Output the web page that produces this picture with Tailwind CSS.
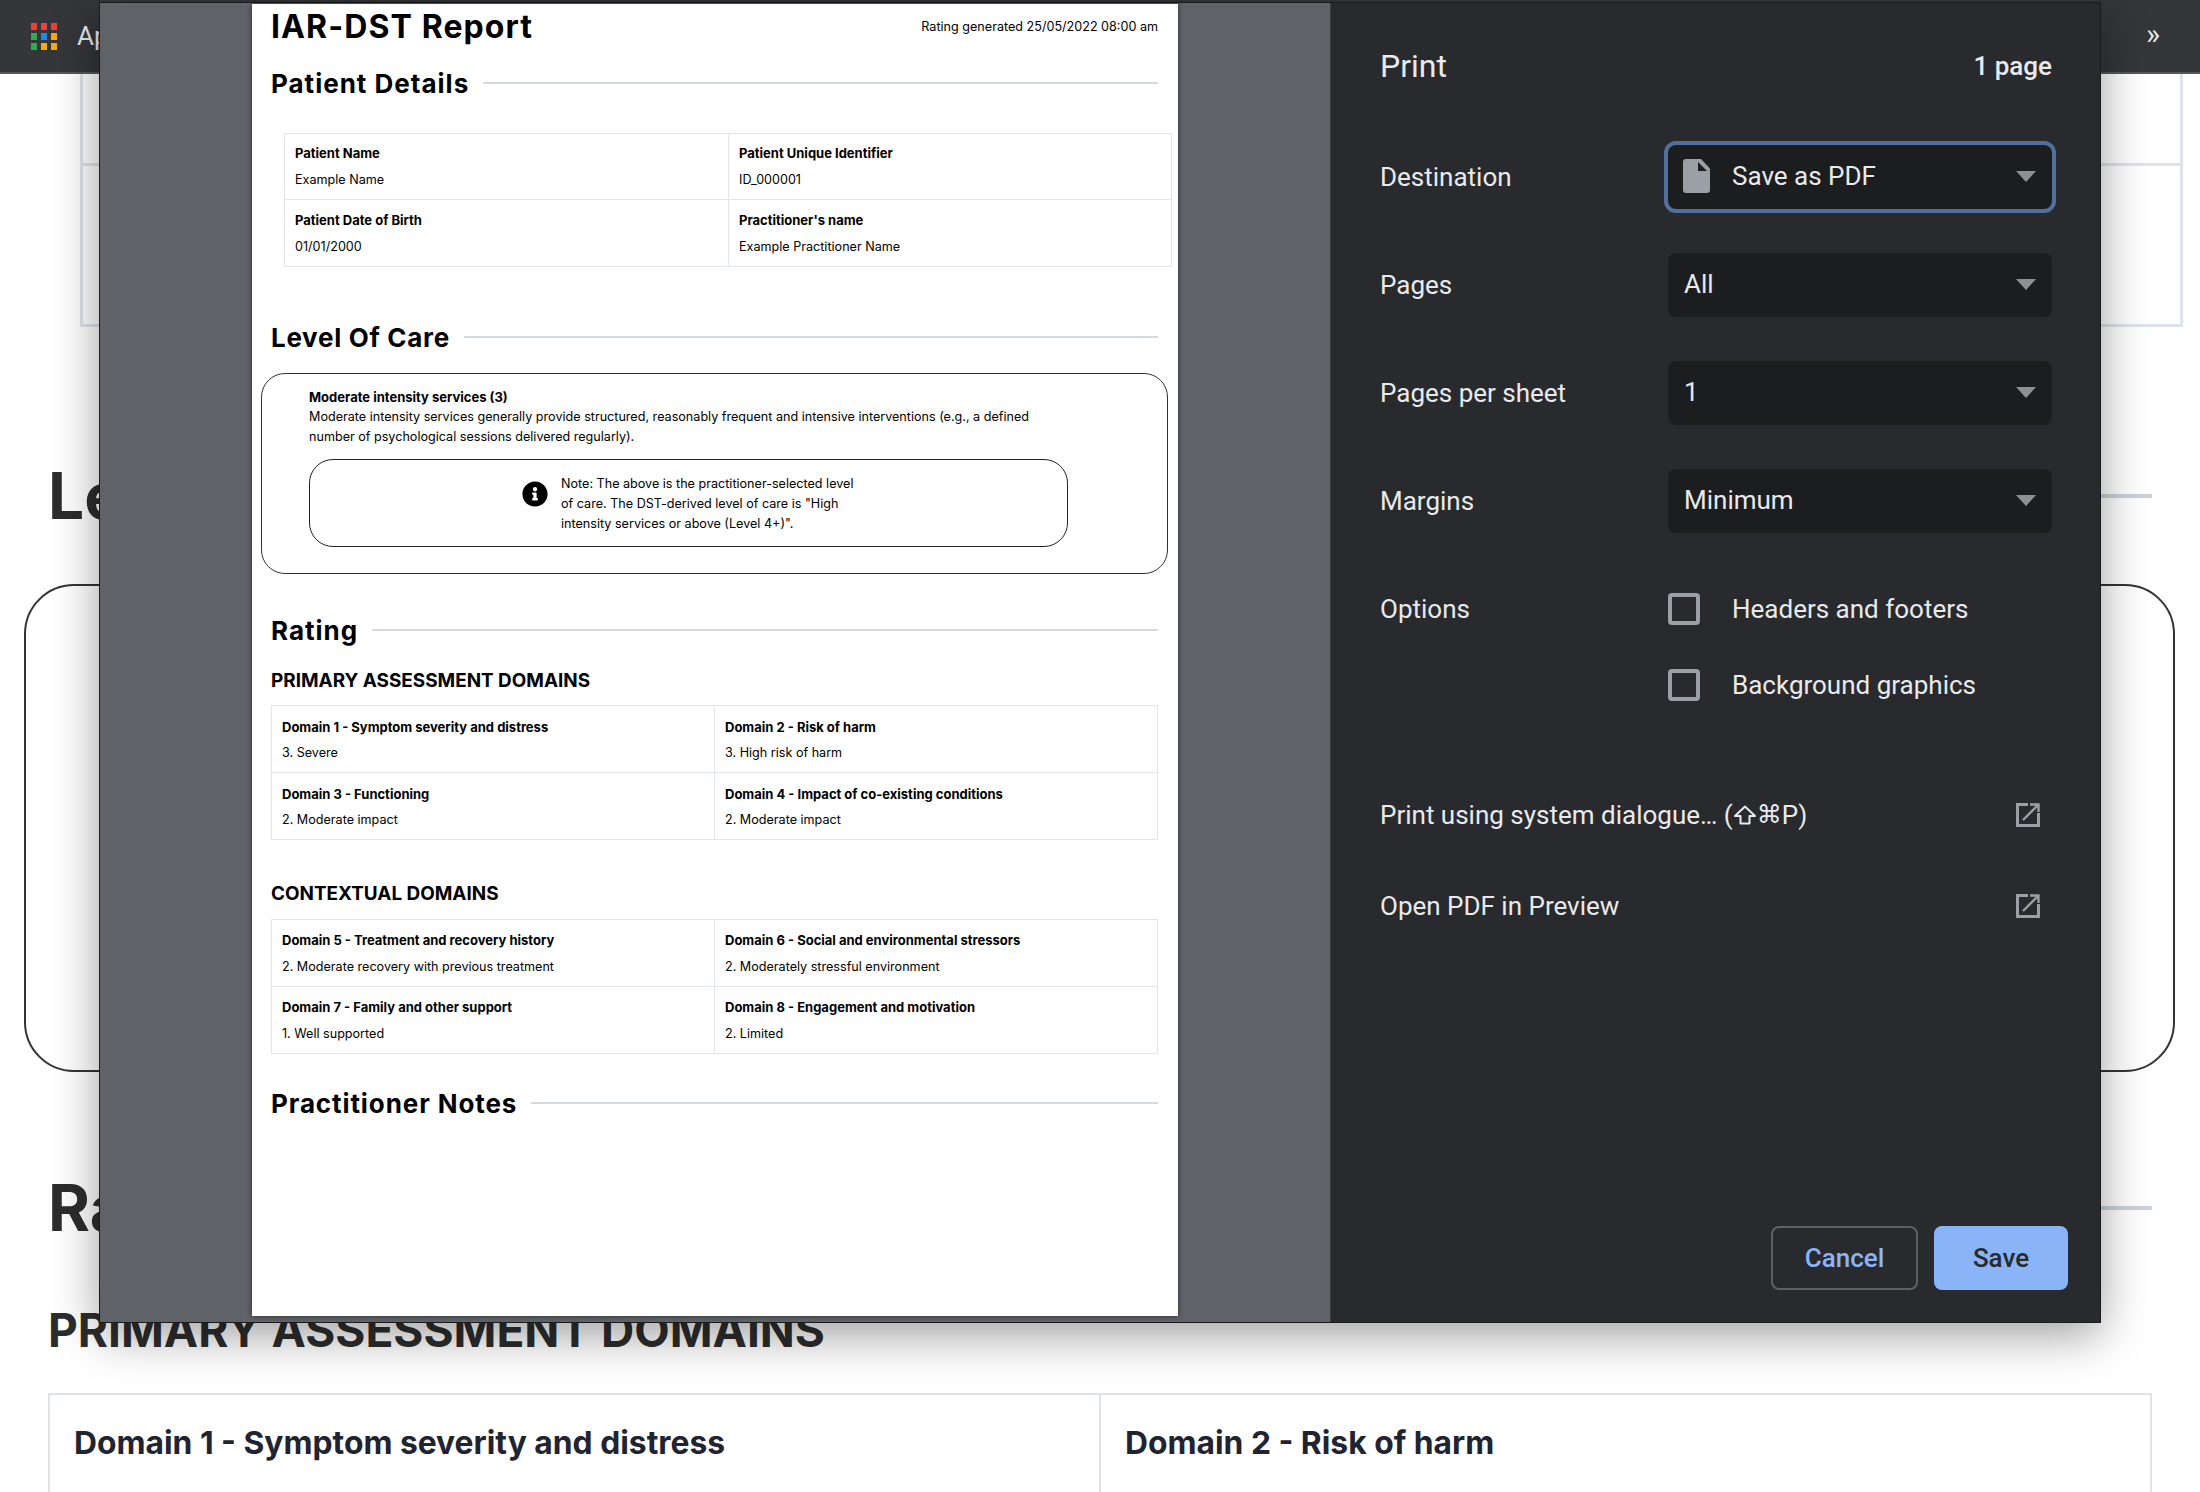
<!DOCTYPE html>
<html lang="en">
<head>
  <meta charset="UTF-8"/>
  <title>IAR-DST Report</title>
  <script src="https://cdn.jsdelivr.net/npm/@tailwindcss/browser@4"></script>
</head>
<body class="relative w-[2200px] h-[1492px] overflow-hidden bg-white font-['Inter',sans-serif] text-[#2d2d2d]">

  <!-- Page behind the dialog -->
  <header class="h-[74px] bg-[#35363a] border-b-2 border-[#55575b] flex items-center pl-[31px] pr-[40px]">
    <div class="grid grid-cols-3 gap-x-[4px] gap-y-[3px] w-[26px]">
      <div class="h-[7px] bg-[#ea4335]"></div><div class="h-[7px] bg-[#ea4335]"></div><div class="h-[7px] bg-[#ea4335]"></div>
      <div class="h-[7px] bg-[#34a853]"></div><div class="h-[7px] bg-[#1a8cf0]"></div><div class="h-[7px] bg-[#f9ab00]"></div>
      <div class="h-[7px] bg-[#34a853]"></div><div class="h-[7px] bg-[#f9ab00]"></div><div class="h-[7px] bg-[#f9ab00]"></div>
    </div>
    <span class="ml-[20px] text-[26px] text-[#e8eaed] font-['Roboto',sans-serif]">Apps</span>
    <span class="ml-auto text-[30px] leading-none text-[#e8eaed] font-['Roboto',sans-serif] -mt-[4px]">»</span>
  </header>

  <main>
    <div class="ml-[80px] w-[2103px] h-[253px] border-x-[3px] border-b-[3px] border-[#e0e4ea]">
      <div class="h-[92px] border-b-[3px] border-[#e0e4ea]"></div>
    </div>

    <div class="ml-[48px] w-[2104px] h-[80px] mt-[129px] flex items-center gap-[24px]">
      <h2 class="text-[64px] font-bold whitespace-nowrap">Level Of Care</h2>
      <div class="flex-1 h-[4px] bg-[#cdd2da]"></div>
    </div>

    <div class="ml-[24px] w-[2151px] h-[488px] mt-[48px] border-2 border-[#333] rounded-[50px]"></div>

    <div class="ml-[48px] w-[2104px] h-[80px] mt-[96px] flex items-center gap-[24px]">
      <h2 class="text-[64px] font-bold whitespace-nowrap">Rating</h2>
      <div class="flex-1 h-[4px] bg-[#cdd2da]"></div>
    </div>

    <h3 class="ml-[48px] mt-[52px] h-[60px] leading-[60px] text-[46px] font-bold whitespace-nowrap">PRIMARY ASSESSMENT DOMAINS</h3>

    <div class="ml-[48px] w-[2104px] mt-[33px] grid grid-cols-[1051px_1fr] border-x-2 border-t-2 border-[#dfe3e8] h-[120px]">
      <div class="pl-[24px] pt-[24px] border-r-2 border-[#dfe3e8] text-[31.8px] leading-[48px] font-bold text-[#1f2430]">Domain 1 - Symptom severity and distress</div>
      <div class="pl-[24px] pt-[24px] text-[31.8px] leading-[48px] font-bold text-[#1f2430]">Domain 2 - Risk of harm</div>
    </div>
  </main>

  <!-- Print dialog -->
  <div class="absolute left-[99px] top-[2px] w-[2002px] h-[1321px] flex border border-[#1a1b1d] shadow-[0_12px_44px_rgba(0,0,0,0.38)]">

    <!-- Preview -->
    <div class="w-[1230px] bg-[#5f6368] pl-[152px] pt-[1px]">
      <div class="w-[926px] h-[1312px] bg-white shadow-[0_0_5px_rgba(0,0,0,0.6)] text-black pl-[19px] pr-[20px] text-[12.6px]">
        <div class="h-[46px] flex items-center justify-between">
          <h1 class="text-[32px] font-bold tracking-[1.1px] whitespace-nowrap">IAR-DST Report</h1>
          <span class="whitespace-nowrap">Rating generated 25/05/2022 08:00 am</span>
        </div>

        <div class="h-[40px] mt-[13px] flex items-center gap-[14px]">
          <h2 class="text-[26px] font-bold tracking-[1px] whitespace-nowrap">Patient Details</h2>
          <div class="flex-1 h-[2px] bg-[#d5d9e0]"></div>
        </div>

        <div class="ml-[13px] w-[888px] mt-[30px] grid grid-cols-[444px_1fr] border border-[#e2e5ea] leading-[20px]">
          <div class="h-[66px] pl-[10px] pt-[9px] border-r border-b border-[#e2e5ea]"><p class="font-bold text-[13px]">Patient Name</p><p class="mt-[7px]">Example Name</p></div>
          <div class="h-[66px] pl-[10px] pt-[9px] border-b border-[#e2e5ea]"><p class="font-bold text-[13px]">Patient Unique Identifier</p><p class="mt-[7px]">ID_000001</p></div>
          <div class="h-[66px] pl-[10px] pt-[10px] border-r border-[#e2e5ea]"><p class="font-bold text-[13px]">Patient Date of Birth</p><p class="mt-[7px]">01/01/2000</p></div>
          <div class="h-[66px] pl-[10px] pt-[10px]"><p class="font-bold text-[13px]">Practitioner's name</p><p class="mt-[7px]">Example Practitioner Name</p></div>
        </div>

        <div class="h-[40px] mt-[50px] flex items-center gap-[14px]">
          <h2 class="text-[26px] font-bold tracking-[0.7px] whitespace-nowrap">Level Of Care</h2>
          <div class="flex-1 h-[2px] bg-[#d5d9e0]"></div>
        </div>

        <div class="-ml-[10px] w-[907px] h-[201px] mt-[16px] border border-[#333] rounded-[24px] pl-[47px] pt-[13px] leading-[20px]">
          <p class="font-bold text-[13px]">Moderate intensity services (3)</p>
          <p class="w-[760px]">Moderate intensity services generally provide structured, reasonably frequent and intensive interventions (e.g., a defined number of psychological sessions delivered regularly).</p>
          <div class="w-[759px] h-[88px] mt-[12px] border border-[#222] rounded-[24px] flex items-center pl-[212px] pt-[1px]">
            <svg class="w-[26px] h-[26px] shrink-0 self-start mt-[20px]" viewBox="0 0 512 512" fill="#000"><path d="M256 8C119.043 8 8 119.083 8 256c0 136.997 111.043 248 248 248s248-111.003 248-248C504 119.083 392.957 8 256 8zm0 110c23.196 0 42 18.804 42 42s-18.804 42-42 42-42-18.804-42-42 18.804-42 42-42zm56 254c0 6.627-5.373 12-12 12h-88c-6.627 0-12-5.373-12-12v-24c0-6.627 5.373-12 12-12h12v-64h-12c-6.627 0-12-5.373-12-12v-24c0-6.627 5.373-12 12-12h64c6.627 0 12 5.373 12 12v100h12c6.627 0 12 5.373 12 12v24z"/></svg>
            <p class="ml-[13px]">Note: The above is the practitioner-selected level<br>of care. The DST-derived level of care is "High<br>intensity services or above (Level 4+)".</p>
          </div>
        </div>

        <div class="h-[40px] mt-[36px] flex items-center gap-[14px]">
          <h2 class="text-[26px] font-bold tracking-[1px] whitespace-nowrap">Rating</h2>
          <div class="flex-1 h-[2px] bg-[#d5d9e0]"></div>
        </div>

        <h3 class="mt-[15px] h-[30px] leading-[30px] pt-[1px] text-[18.9px] font-bold whitespace-nowrap">PRIMARY ASSESSMENT DOMAINS</h3>
        <div class="w-[887px] mt-[10px] grid grid-cols-[443px_1fr] border border-[#e2e5ea] leading-[20px]">
          <div class="h-[67px] pl-[10px] pt-[11px] border-r border-b border-[#e2e5ea]"><p class="font-bold text-[13px]">Domain 1 - Symptom severity and distress</p><p class="mt-[6px]">3. Severe</p></div>
          <div class="h-[67px] pl-[10px] pt-[11px] border-b border-[#e2e5ea]"><p class="font-bold text-[13px]">Domain 2 - Risk of harm</p><p class="mt-[6px]">3. High risk of harm</p></div>
          <div class="h-[66px] pl-[10px] pt-[11px] border-r border-[#e2e5ea]"><p class="font-bold text-[13px]">Domain 3 - Functioning</p><p class="mt-[6px]">2. Moderate impact</p></div>
          <div class="h-[66px] pl-[10px] pt-[11px]"><p class="font-bold text-[13px]">Domain 4 - Impact of co-existing conditions</p><p class="mt-[6px]">2. Moderate impact</p></div>
        </div>

        <h3 class="mt-[38px] h-[30px] leading-[30px] pt-[1px] text-[18.9px] font-bold whitespace-nowrap">CONTEXTUAL DOMAINS</h3>
        <div class="w-[887px] mt-[11px] grid grid-cols-[443px_1fr] border border-[#e2e5ea] leading-[20px]">
          <div class="h-[67px] pl-[10px] pt-[10px] border-r border-b border-[#e2e5ea]"><p class="font-bold text-[13px]">Domain 5 - Treatment and recovery history</p><p class="mt-[7px]">2. Moderate recovery with previous treatment</p></div>
          <div class="h-[67px] pl-[10px] pt-[10px] border-b border-[#e2e5ea]"><p class="font-bold text-[13px]">Domain 6 - Social and environmental stressors</p><p class="mt-[7px]">2. Moderately stressful environment</p></div>
          <div class="h-[66px] pl-[10px] pt-[10px] border-r border-[#e2e5ea]"><p class="font-bold text-[13px]">Domain 7 - Family and other support</p><p class="mt-[7px]">1. Well supported</p></div>
          <div class="h-[66px] pl-[10px] pt-[10px]"><p class="font-bold text-[13px]">Domain 8 - Engagement and motivation</p><p class="mt-[7px]">2. Limited</p></div>
        </div>

        <div class="h-[40px] mt-[29px] flex items-center gap-[14px]">
          <h2 class="text-[26px] font-bold tracking-[0.9px] whitespace-nowrap">Practitioner Notes</h2>
          <div class="flex-1 h-[2px] bg-[#d5d9e0]"></div>
        </div>
      </div>
    </div>

    <!-- Settings panel -->
    <div class="flex-1 flex flex-col bg-[#292a2d] border-l border-[#3c3d41] pl-[49px] pr-[47px] font-['Roboto',sans-serif] text-[26px] text-[#e8eaed]">
      <div class="h-[40px] mt-[43px] pr-[1px] flex items-center justify-between">
        <h2 class="text-[32px]">Print</h2>
        <span class="font-medium">1 page</span>
      </div>

      <div class="mt-[59px] flex flex-col gap-[44px]">
        <div class="flex items-center h-[64px]">
          <span class="w-[288px]">Destination</span>
          <div class="w-[384px] h-[64px] bg-[#1c1d1f] rounded-[8px] ring-[4px] ring-[#51709b] flex items-center pl-[15px] pr-[16px] pb-[2px]">
            <svg class="w-[27px] h-[34px] shrink-0" viewBox="0 0 27 34" fill="#9aa0a6"><path d="M3 0H18L27 9.5V31a3 3 0 0 1-3 3H3a3 3 0 0 1-3-3V3a3 3 0 0 1 3-3z"/><path d="M15 3V12H24z" fill="#1c1d1f"/></svg>
            <span class="ml-[22px]">Save as PDF</span>
            <svg class="ml-auto w-[20px] h-[11px]" viewBox="0 0 20 11" fill="#8e9093"><path d="M0 0h20L10 11z"/></svg>
          </div>
        </div>
        <div class="flex items-center h-[64px]">
          <span class="w-[288px]">Pages</span>
          <div class="w-[384px] h-[64px] bg-[#1c1d1f] rounded-[8px] flex items-center pl-[16px] pr-[16px] pb-[2px]">
            <span>All</span>
            <svg class="ml-auto w-[20px] h-[11px]" viewBox="0 0 20 11" fill="#8e9093"><path d="M0 0h20L10 11z"/></svg>
          </div>
        </div>
        <div class="flex items-center h-[64px]">
          <span class="w-[288px]">Pages per sheet</span>
          <div class="w-[384px] h-[64px] bg-[#1c1d1f] rounded-[8px] flex items-center pl-[16px] pr-[16px] pb-[2px]">
            <span>1</span>
            <svg class="ml-auto w-[20px] h-[11px]" viewBox="0 0 20 11" fill="#8e9093"><path d="M0 0h20L10 11z"/></svg>
          </div>
        </div>
        <div class="flex items-center h-[64px]">
          <span class="w-[288px]">Margins</span>
          <div class="w-[384px] h-[64px] bg-[#1c1d1f] rounded-[8px] flex items-center pl-[16px] pr-[16px] pb-[2px]">
            <span>Minimum</span>
            <svg class="ml-auto w-[20px] h-[11px]" viewBox="0 0 20 11" fill="#8e9093"><path d="M0 0h20L10 11z"/></svg>
          </div>
        </div>
      </div>

      <div class="mt-[60px] flex flex-col gap-[44px]">
        <div class="flex items-center h-[32px]">
          <span class="w-[288px]">Options</span>
          <div class="w-[32px] h-[32px] border-[4px] border-[#9aa0a6] rounded-[4px]"></div>
          <span class="ml-[32px]">Headers and footers</span>
        </div>
        <div class="flex items-center h-[32px] pl-[288px]">
          <div class="w-[32px] h-[32px] border-[4px] border-[#9aa0a6] rounded-[4px]"></div>
          <span class="ml-[32px]">Background graphics</span>
        </div>
      </div>

      <div class="mt-[94px] flex flex-col gap-[51px]">
        <div class="h-[40px] flex items-center justify-between pr-[13px]">
          <span class="flex items-center">Print using system dialogue… (<svg class="w-[24px] h-[20px]" viewBox="0 0 24 20" fill="none" stroke="#e8eaed" stroke-width="2" stroke-linejoin="round"><path d="M12 1.5L22 11h-5.500v7.500h-9V11H2z"/></svg><span class="font-['DejaVu_Sans',sans-serif] text-[25px]">⌘</span>P)</span>
          <svg class="w-[24px] h-[24px]" viewBox="0 0 24 24" fill="none" stroke="#9aa0a6" stroke-width="3"><path d="M12 1.5H1.500v21h21V10"/><path stroke-width="2.400" d="M7 17L22 2M14 1.500h8.500V9"/></svg>
        </div>
        <div class="h-[40px] flex items-center justify-between pr-[13px]">
          <span>Open PDF in Preview</span>
          <svg class="w-[24px] h-[24px]" viewBox="0 0 24 24" fill="none" stroke="#9aa0a6" stroke-width="3"><path d="M12 1.5H1.500v21h21V10"/><path stroke-width="2.400" d="M7 17L22 2M14 1.500h8.500V9"/></svg>
        </div>
      </div>

      <div class="mt-auto mb-[32px] -mr-[15px] flex justify-end gap-[16px] font-medium">
        <button class="w-[147px] h-[64px] border-2 border-[#5f6064] rounded-[8px] text-[#8ab4f8]">Cancel</button>
        <button class="w-[134px] h-[64px] bg-[#8ab4f8] rounded-[8px] text-[#292a2d]">Save</button>
      </div>
    </div>
  </div>
</body>
</html>
